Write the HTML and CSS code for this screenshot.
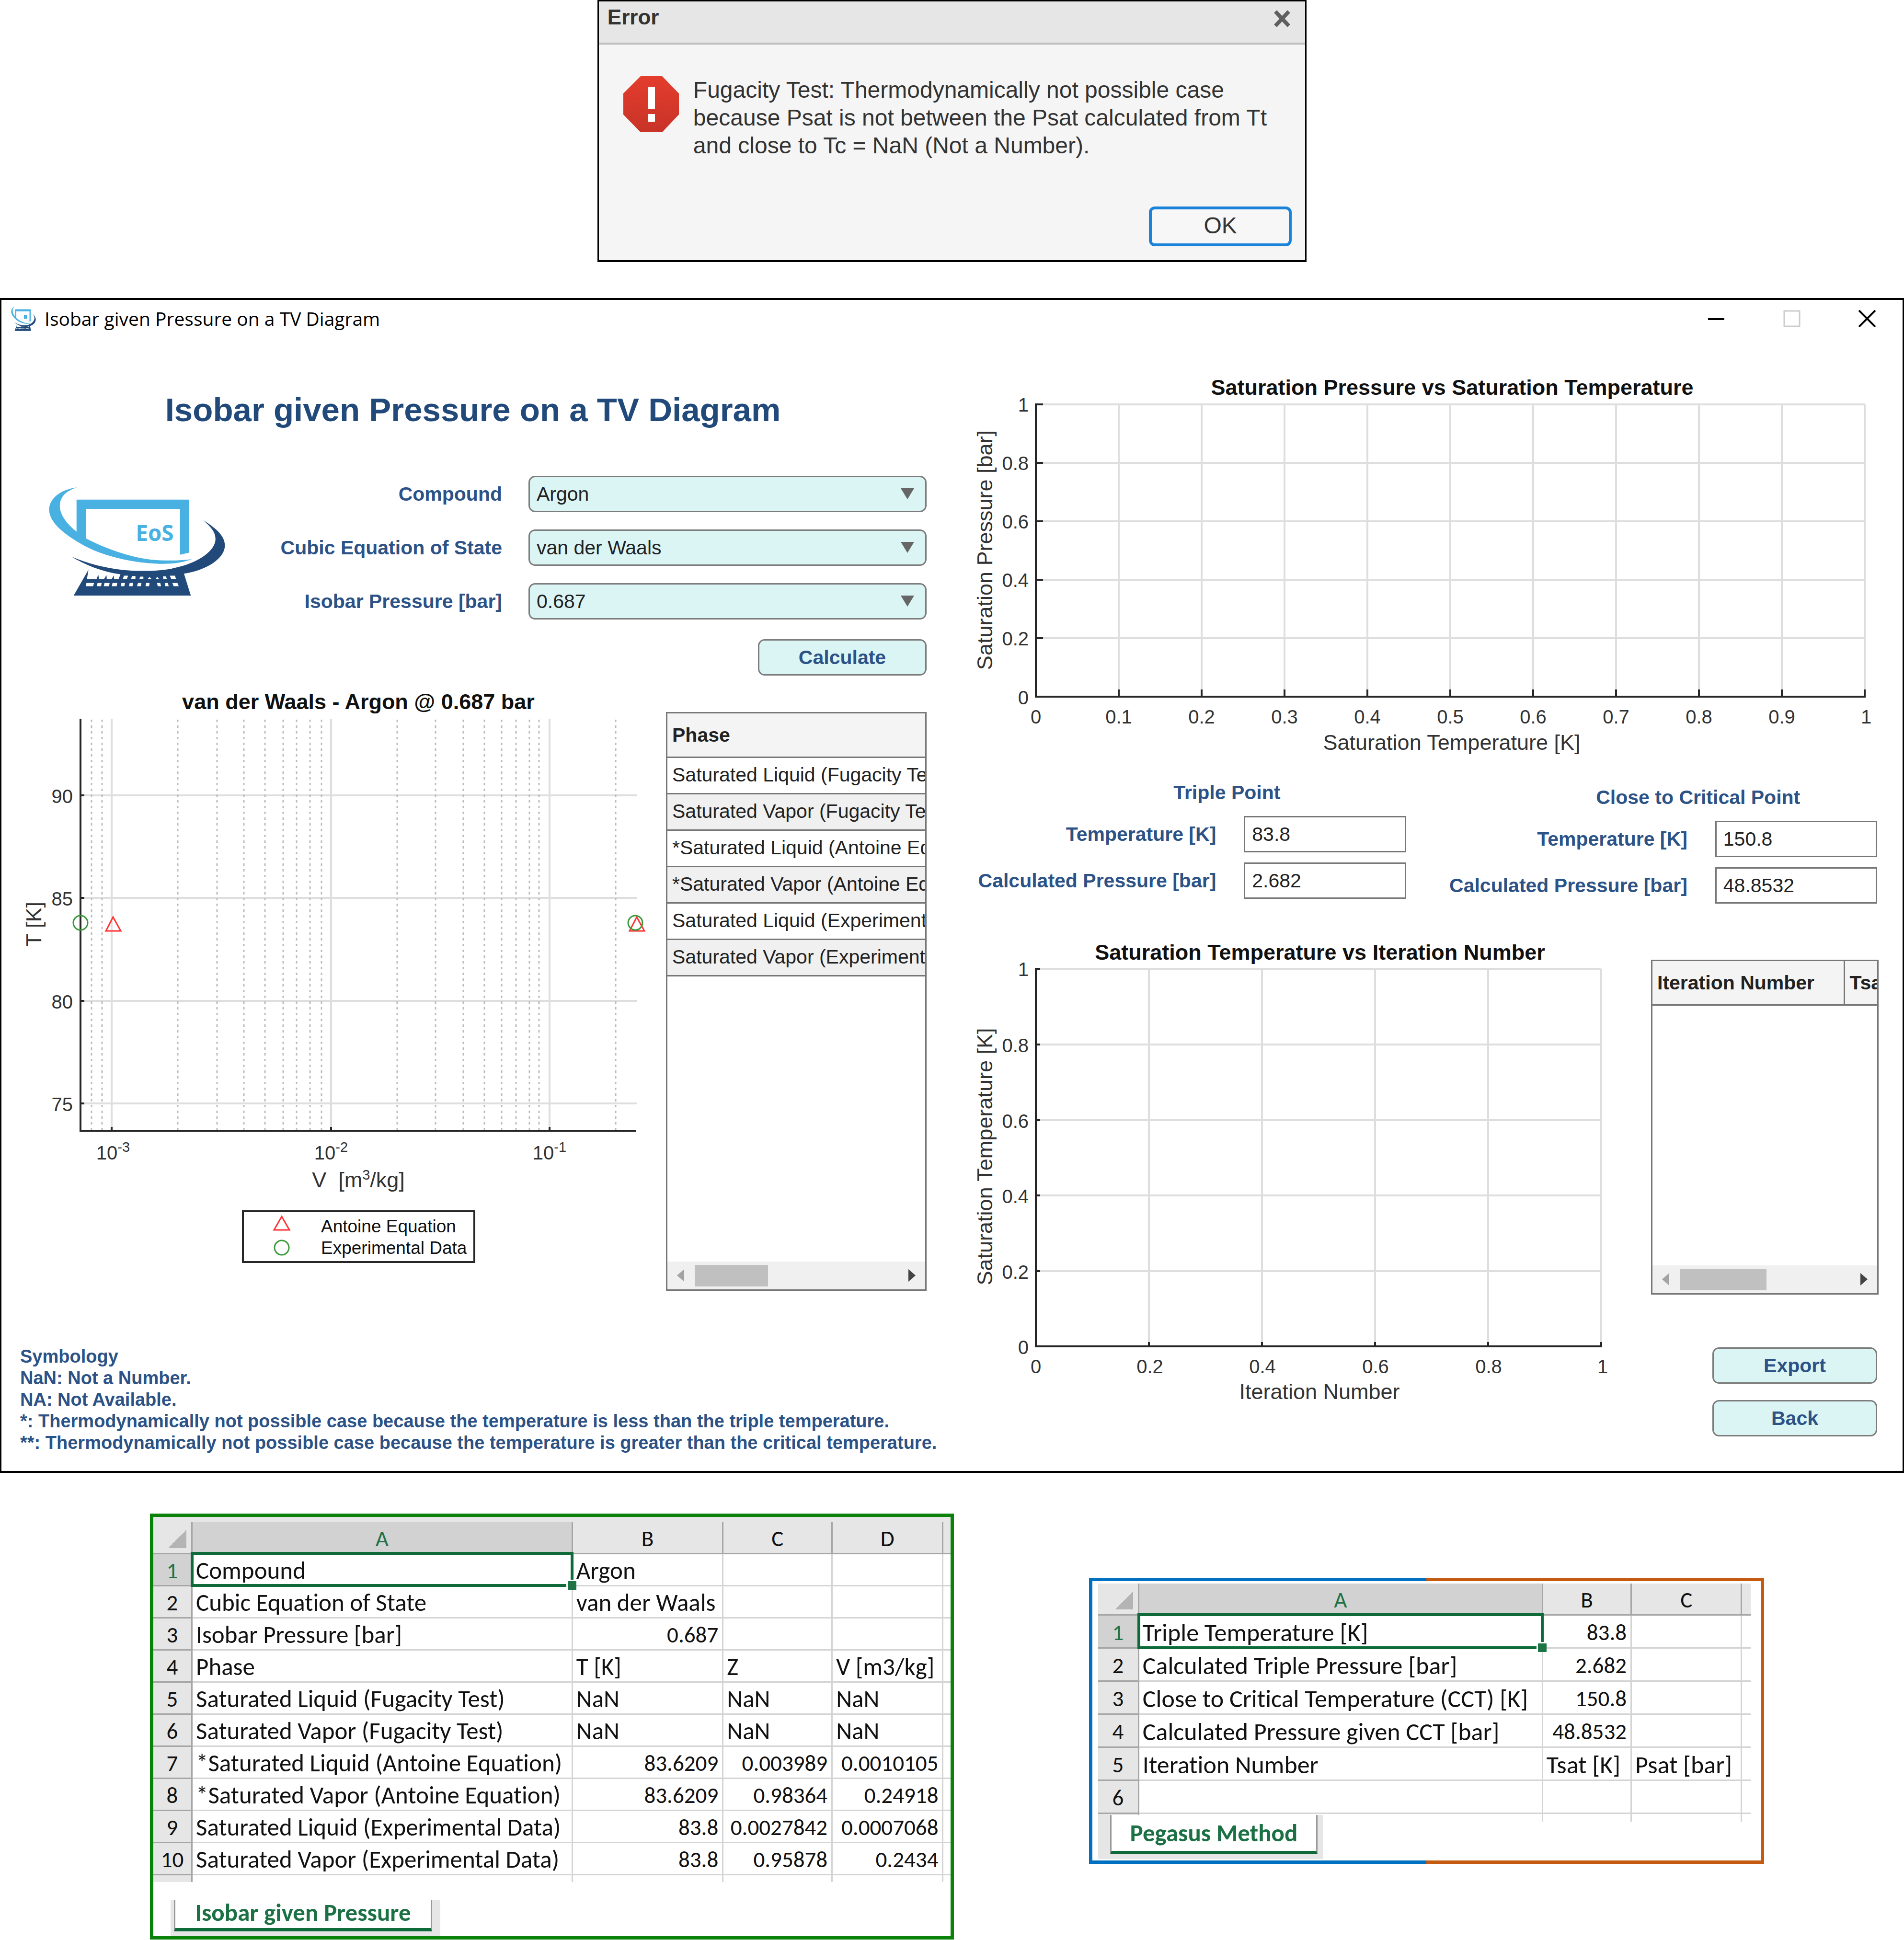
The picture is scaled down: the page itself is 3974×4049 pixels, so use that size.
FILE: index.html
```html
<!DOCTYPE html>
<html lang="en">
<head>
<meta charset="utf-8">
<title>Isobar given Pressure on a TV Diagram</title>
<link rel="stylesheet" href="styles.css">
</head>
<body>
<section class="dialog" role="alertdialog" aria-labelledby="dlg-title">
  <header class="dialog-bar">
    <h2 id="dlg-title" class="dialog-title">Error</h2>
    <button class="icon-btn" aria-label="Close"><svg width="36" height="36" viewBox="0 0 36 36"><path d="M4 3L32 33M32 3L4 33" stroke="#5f5f5f" stroke-width="8" fill="none"/></svg></button>
  </header>
  <div class="dialog-body">
    <svg class="stop" width="116" height="117" viewBox="0 0 116 117">
      <defs><linearGradient id="red" x1="0" y1="0" x2="0" y2="1"><stop offset="0" stop-color="#e33d2d"/><stop offset="1" stop-color="#c83327"/></linearGradient></defs>
      <path d="M36 0H81L116 36V80L81 117H36L0 80V36Z" fill="url(#red)"/>
      <path d="M51 22H66V69H51ZM51 79H66V95H51Z" fill="#fff"/>
    </svg>
    <p class="dialog-text">Fugacity Test: Thermodynamically not possible case<br>because Psat is not between the Psat calculated from Tt<br>and close to Tc = NaN (Not a Number).</p>
  </div>
  <footer class="dialog-foot"><button class="ok">OK</button></footer>
</section>

<main class="app">
  <header class="titlebar">
    <svg class="app-icon" width="52" height="52" viewBox="60 105 1120 695" preserveAspectRatio="none">
      <use href="#logo-shape"/>
      <rect x="640" y="350" width="150" height="110" fill="#49b1e2"/>
    </svg>
    <span class="app-name">Isobar given Pressure on a TV Diagram</span>
    <div class="win-btns">
      <button class="icon-btn" aria-label="Minimize"><svg width="36" height="36" viewBox="0 0 36 36"><path d="M0 19H34" stroke="#000" stroke-width="4"/></svg></button>
      <button class="icon-btn" aria-label="Maximize" disabled><svg width="36" height="36" viewBox="0 0 36 36"><path d="M2 2H34V34H2Z" stroke="#ccc" stroke-width="3" fill="none"/></svg></button>
      <button class="icon-btn" aria-label="Close"><svg width="36" height="36" viewBox="0 0 36 36"><path d="M1 1L35 35M35 1L1 35" stroke="#000" stroke-width="4"/></svg></button>
    </div>
  </header>

  <div class="columns">
    <div class="left">
      <h1 class="heading">Isobar given Pressure on a TV Diagram</h1>
      <form class="setup" onsubmit="return false">
        <svg class="logo" viewBox="0 0 1260 870" role="img" aria-label="EoS">
          <g id="logo-shape">
            <path fill="#49b1e2" d="M243 115C165 140 135 180 135 235C137 290 180 345 240 393V192H948V525L890 538V250H298V435C450 515 600 555 700 568C800 578 890 576 965 566C900 590 840 597 760 595C600 590 400 550 260 465C150 400 68 330 68 255C68 180 150 125 243 115Z"/>
            <path fill="#214a7a" d="M208 550C350 610 500 640 650 640C740 640 820 632 850 622C1010 590 1113 510 1113 440C1113 395 1085 365 1035 320C1120 375 1172 420 1172 480C1172 560 1060 635 915 657L958 795H222L315 632L305 692H365L377 664L381 692H412L428 666L430 692H460L474 668L476 692H504L516 661C400 645 290 600 208 550Z"/>
            <path fill="#fff" d="M538 670H564L556 692H530ZM588 672H610V692H583ZM640 676H660V692H634ZM698 678L714 692H686ZM746 676L760 692H738ZM783 674H802L808 692H786ZM826 670H858L866 692H836ZM302 716H350L344 736H300ZM372 716H398L394 736H368ZM416 716H448L444 736H411ZM466 716H496L492 736H462ZM522 716H545L540 736H518ZM574 716H595L592 736H569ZM626 716H648L644 736H620ZM678 716H699L696 736H673ZM746 716H766L771 736H750ZM794 716H814L819 736H798ZM842 716H874L882 736H850Z"/>
          </g>
          <text x="612" y="452" class="logo-text">EoS</text>
        </svg>
        <div class="fields">
          <label for="compound">Compound</label>
          <span class="pick"><select id="compound"><option>Argon</option></select></span>
          <label for="eos">Cubic Equation of State</label>
          <span class="pick"><select id="eos"><option>van der Waals</option></select></span>
          <label for="pressure">Isobar Pressure [bar]</label>
          <span class="pick"><select id="pressure"><option>0.687</option></select></span>
          <button class="btn calculate">Calculate</button>
        </div>
      </form>

      <div class="results">
        <svg class="chart" viewBox="40 1430 1310 1264" role="img" aria-label="van der Waals - Argon at 0.687 bar">
          <path class="grid" d="M168 1660H1330M168 1874H1330M168 2089H1330M168 2303H1330M233 1500V2360M691 1500V2360M1147 1500V2360"/>
          <path class="minor" d="M191 1502V2360M213 1502V2360M371 1502V2360M453 1502V2360M509 1502V2360M553 1502V2360M591 1502V2360M619 1502V2360M647 1502V2360M671 1502V2360M829 1502V2360M909 1502V2360M967 1502V2360M1011 1502V2360M1047 1502V2360M1077 1502V2360M1105 1502V2360M1125 1502V2360M1285 1502V2360"/>
          <path class="axis" d="M168 1500V2360H1328M168 1660H176M168 1874H176M168 2089H176M168 2303H176M233 2360V2352M691 2360V2352M1147 2360V2352"/>
          <g class="red"><path d="M236 1914L252 1943H221Z"/><path d="M1329 1914L1345 1943H1314Z"/><path d="M588 2539L604 2567H572Z"/></g>
          <g class="green"><circle cx="168" cy="1926" r="15"/><circle cx="1326" cy="1926" r="15"/><circle cx="588" cy="2604" r="15"/></g>
          <text class="title" x="748" y="1480">van der Waals - Argon @ 0.687 bar</text>
          <g class="tick end"><text x="152" y="1676">90</text><text x="152" y="1890">85</text><text x="152" y="2105">80</text><text x="152" y="2319">75</text></g>
          <g class="tick"><text x="236" y="2420">10<tspan class="sup" dy="-16">-3</tspan></text><text x="691" y="2420">10<tspan class="sup" dy="-16">-2</tspan></text><text x="1147" y="2420">10<tspan class="sup" dy="-16">-1</tspan></text></g>
          <text class="name" x="748" y="2478" xml:space="preserve">V  [m<tspan class="sup" dy="-16">3</tspan><tspan dy="16">/kg]</tspan></text>
          <text class="name" transform="translate(86 1929) rotate(-90)">T [K]</text>
          <path class="frame" d="M507 2528H990V2634H507Z"/>
          <text class="key" x="670" y="2572">Antoine Equation</text>
          <text class="key" x="670" y="2617">Experimental Data</text>
        </svg>
        <div class="panel phase-panel">
          <table class="list phases">
            <thead><tr><th scope="col">Phase</th></tr></thead>
            <tbody>
              <tr><td>Saturated Liquid (Fugacity Test)</td></tr>
              <tr><td>Saturated Vapor (Fugacity Test)</td></tr>
              <tr><td>*Saturated Liquid (Antoine Equation)</td></tr>
              <tr><td>*Saturated Vapor (Antoine Equation)</td></tr>
              <tr><td>Saturated Liquid (Experimental Data)</td></tr>
              <tr><td>Saturated Vapor (Experimental Data)</td></tr>
            </tbody>
          </table>
          <div class="scroll"><i class="arr prev"></i><span class="track"><i class="thumb phase-thumb"></i></span><i class="arr next"></i></div>
        </div>
      </div>

      <div class="symbology">Symbology<br>NaN: Not a Number.<br>NA: Not Available.<br>*: Thermodynamically not possible case because the temperature is less than the triple temperature.<br>**: Thermodynamically not possible case because the temperature is greater than the critical temperature.</div>
    </div>

    <div class="right">
      <svg class="chart" viewBox="2030 770 1891 810" role="img" aria-label="Saturation Pressure vs Saturation Temperature">
        <path class="grid" d="M2162 844H3892M2162 966H3892M2162 1088H3892M2162 1210H3892M2162 1332H3892M2335 844V1454M2508 844V1454M2681 844V1454M2854 844V1454M3027 844V1454M3200 844V1454M3373 844V1454M3546 844V1454M3719 844V1454M3892 844V1454"/>
        <path class="axis" d="M2162 842V1454H3894M2162 844H2177M2162 966H2177M2162 1088H2177M2162 1210H2177M2162 1332H2177M2335 1454V1439M2508 1454V1439M2681 1454V1439M2854 1454V1439M3027 1454V1439M3200 1454V1439M3373 1454V1439M3546 1454V1439M3719 1454V1439M3892 1454V1439"/>
        <text class="title" x="3031" y="824">Saturation Pressure vs Saturation Temperature</text>
        <g class="tick end"><text x="2147" y="859">1</text><text x="2147" y="981">0.8</text><text x="2147" y="1103">0.6</text><text x="2147" y="1225">0.4</text><text x="2147" y="1347">0.2</text><text x="2147" y="1470">0</text></g>
        <g class="tick"><text x="2162" y="1510">0</text><text x="2335" y="1510">0.1</text><text x="2508" y="1510">0.2</text><text x="2681" y="1510">0.3</text><text x="2854" y="1510">0.4</text><text x="3027" y="1510">0.5</text><text x="3200" y="1510">0.6</text><text x="3373" y="1510">0.7</text><text x="3546" y="1510">0.8</text><text x="3719" y="1510">0.9</text><text x="3895" y="1510">1</text></g>
        <text class="name" x="3030" y="1565">Saturation Temperature [K]</text>
        <text class="name" transform="translate(2071 1148) rotate(-90)">Saturation Pressure [bar]</text>
      </svg>

      <div class="points">
        <section class="point">
          <h3 class="point-title">Triple Point</h3>
          <label for="tt">Temperature [K]</label><input id="tt" value="83.8">
          <label for="tp">Calculated Pressure [bar]</label><input id="tp" value="2.682">
        </section>
        <section class="point critical">
          <h3 class="point-title">Close to Critical Point</h3>
          <label for="ct">Temperature [K]</label><input id="ct" value="150.8">
          <label for="cp">Calculated Pressure [bar]</label><input id="cp" value="48.8532">
        </section>
      </div>

      <div class="iterations">
        <svg class="chart" viewBox="2030 1950 1330 1048" role="img" aria-label="Saturation Temperature vs Iteration Number">
          <path class="grid" d="M2162 2022H3342M2162 2180H3342M2162 2338H3342M2162 2495H3342M2162 2653H3342M2398 2022V2810M2634 2022V2810M2870 2022V2810M3106 2022V2810M3342 2022V2810"/>
          <path class="axis" d="M2162 2020V2810H3344M2162 2022H2171M2162 2180H2171M2162 2338H2171M2162 2495H2171M2162 2653H2171M2398 2810V2801M2634 2810V2801M2870 2810V2801M3106 2810V2801M3342 2810V2801"/>
          <text class="title" x="2755" y="2003">Saturation Temperature vs Iteration Number</text>
          <g class="tick end"><text x="2147" y="2037">1</text><text x="2147" y="2196">0.8</text><text x="2147" y="2354">0.6</text><text x="2147" y="2511">0.4</text><text x="2147" y="2669">0.2</text><text x="2147" y="2826">0</text></g>
          <g class="tick"><text x="2162" y="2866">0</text><text x="2400" y="2866">0.2</text><text x="2635" y="2866">0.4</text><text x="2871" y="2866">0.6</text><text x="3107" y="2866">0.8</text><text x="3345" y="2866">1</text></g>
          <text class="name" x="2754" y="2920">Iteration Number</text>
          <text class="name" transform="translate(2071 2414) rotate(-90)">Saturation Temperature [K]</text>
        </svg>
        <div class="side">
          <div class="panel">
            <table class="list iter">
              <thead><tr><th scope="col">Iteration Number</th><th scope="col">Tsat [K]</th></tr></thead>
            </table>
            <div class="scroll"><i class="arr prev"></i><span class="track"><i class="thumb iter-thumb"></i></span><i class="arr next"></i></div>
          </div>
          <button class="btn export">Export</button>
          <button class="btn back">Back</button>
        </div>
      </div>
    </div>
  </div>
</main>

<div class="sheets">
  <section class="sheet results-sheet">
    <table class="cells">
      <colgroup><col style="width:4.93%"><col style="width:47.7%"><col style="width:18.9%"><col style="width:13.7%"><col style="width:13.9%"><col></colgroup>
      <thead><tr><th class="corner"></th><th class="on">A</th><th>B</th><th>C</th><th>D</th><th></th></tr></thead>
      <tbody>
        <tr><th class="on">1</th><td class="sel">Compound</td><td>Argon</td><td></td><td></td><td></td></tr>
        <tr><th>2</th><td>Cubic Equation of State</td><td>van der Waals</td><td></td><td></td><td></td></tr>
        <tr><th>3</th><td>Isobar Pressure [bar]</td><td class="num">0.687</td><td></td><td></td><td></td></tr>
        <tr><th>4</th><td>Phase</td><td>T [K]</td><td>Z</td><td>V [m3/kg]</td><td></td></tr>
        <tr><th>5</th><td>Saturated Liquid (Fugacity Test)</td><td>NaN</td><td>NaN</td><td>NaN</td><td></td></tr>
        <tr><th>6</th><td>Saturated Vapor (Fugacity Test)</td><td>NaN</td><td>NaN</td><td>NaN</td><td></td></tr>
        <tr><th>7</th><td>*Saturated Liquid (Antoine Equation)</td><td class="num">83.6209</td><td class="num">0.003989</td><td class="num">0.0010105</td><td></td></tr>
        <tr><th>8</th><td>*Saturated Vapor (Antoine Equation)</td><td class="num">83.6209</td><td class="num">0.98364</td><td class="num">0.24918</td><td></td></tr>
        <tr><th>9</th><td>Saturated Liquid (Experimental Data)</td><td class="num">83.8</td><td class="num">0.0027842</td><td class="num">0.0007068</td><td></td></tr>
        <tr><th>10</th><td>Saturated Vapor (Experimental Data)</td><td class="num">83.8</td><td class="num">0.95878</td><td class="num">0.2434</td><td></td></tr>
        <tr class="cut"><th></th><td></td><td></td><td></td><td></td><td></td></tr>
      </tbody>
    </table>
    <div class="tabs"><button class="tab">Isobar given Pressure</button></div>
  </section>

  <section class="sheet pegasus-sheet">
    <table class="cells">
      <colgroup><col style="width:6.3%"><col style="width:61.9%"><col style="width:13.6%"><col style="width:16.9%"><col></colgroup>
      <thead><tr><th class="corner"></th><th class="on">A</th><th>B</th><th>C</th><th></th></tr></thead>
      <tbody>
        <tr><th class="on">1</th><td class="sel">Triple Temperature [K]</td><td class="num">83.8</td><td></td><td></td></tr>
        <tr><th>2</th><td>Calculated Triple Pressure [bar]</td><td class="num">2.682</td><td></td><td></td></tr>
        <tr><th>3</th><td>Close to Critical Temperature (CCT) [K]</td><td class="num">150.8</td><td></td><td></td></tr>
        <tr><th>4</th><td>Calculated Pressure given CCT [bar]</td><td class="num">48.8532</td><td></td><td></td></tr>
        <tr><th>5</th><td>Iteration Number</td><td>Tsat [K]</td><td>Psat [bar]</td><td></td></tr>
        <tr><th>6</th><td></td><td></td><td></td><td></td></tr>
        <tr class="cut"><th></th><td></td><td></td><td></td><td></td></tr>
      </tbody>
    </table>
    <div class="tabs"><button class="tab">Pegasus Method</button></div>
  </section>
</div>
</body>
</html>
```
FILE: styles.css
```css
* { box-sizing: border-box; }
body {
  margin: 0;
  background: #fff;
  font-family: "Liberation Sans", Arial, sans-serif;
  font-size: 41px;
  line-height: 48px;
  color: #222;
}
h1, h2, h3, p { margin: 0; }
button, select, input { font: inherit; color: inherit; margin: 0; }
svg { display: block; }
.icon-btn { border: 0; background: none; padding: 0; }

/* Error dialog */
.dialog {
  width: 37.25%;
  margin: 0 auto;
  border: 3px solid #000;
  border-bottom-width: 4px;
  background: #f5f5f5;
  font-size: 48px;
  line-height: 58px;
  color: #333;
}
.dialog-bar {
  display: flex;
  justify-content: space-between;
  align-items: flex-start;
  height: 90px;
  padding: 4px 30px 0 18px;
  background: #e6e6e6;
  border-bottom: 4px solid #bdbdbd;
}
.dialog-bar .icon-btn { padding-top: 14px; }
.dialog-title { font-size: 44px; }
.dialog-body { display: flex; gap: 30px; padding: 66px 52px 0 51px; }
.dialog-text { white-space: nowrap; }
.dialog-foot { display: flex; justify-content: flex-end; padding: 98px 28px 29px; }
.ok {
  width: 298px;
  height: 83px;
  padding: 0 0 4px;
  border: 6px solid #1a82d8;
  border-radius: 12px;
  background: #f7f7f7;
}

/* Application window */
.app {
  margin-top: 75px;
  border: 3px solid #000;
  border-width: 4px 3px;
  background: #fff;
}
.titlebar {
  display: flex;
  align-items: center;
  height: 84px;
  padding: 0 56px 6px 20px;
  font-family: "Open Sans", "Noto Sans", sans-serif;
  font-size: 39px;
  color: #000;
}
.app-name { margin-left: 18px; flex: 1; }
.win-btns { display: flex; gap: 121px; }
.columns { display: grid; grid-template-columns: 1997fr 1971fr; }
.left { min-width: 0; padding: 106px 66px 0 37px; }
.right { min-width: 0; padding: 60px 50px 72px 30px; }
.heading {
  font-size: 69px;
  line-height: 80px;
  text-align: center;
  color: #214a7a;
}
label, .point-title, .symbology { font-weight: bold; color: #2c5286; }

.setup { display: grid; grid-template-columns: 460fr 1434fr; margin-top: 83px; }
.logo { width: 91%; margin-left: 40px; }
.logo-text { font: bold 138px "Open Sans", "Noto Sans", sans-serif; fill: #49b1e2; }
.fields {
  display: grid;
  grid-template-columns: 603fr 831fr;
  row-gap: 36px;
  align-items: center;
  padding-top: 14px;
}
.fields label { text-align: right; padding-right: 55px; }
.pick { position: relative; display: block; }
.pick::after {
  content: "";
  position: absolute;
  right: 26px;
  top: 26px;
  width: 28px;
  height: 23px;
  background: #666;
  clip-path: polygon(0 0, 100% 0, 50% 100%);
  pointer-events: none;
}
.pick select {
  display: block;
  appearance: none;
  width: 100%;
  height: 76px;
  padding: 0 14px;
  border: 3px solid #7c7c7c;
  border-radius: 14px;
  background: #dbf4f4;
}
.btn {
  height: 76px;
  padding: 0;
  border: 3px solid #7c7c7c;
  border-radius: 14px;
  background: #dbf4f4;
  color: #2c5286;
  font-weight: bold;
}
.calculate { grid-column: 2; justify-self: end; width: 352px; margin-top: 5px; }

.results { display: grid; grid-template-columns: 1310fr 544fr; column-gap: 40px; margin-top: 20px; }
.chart { width: 100%; }
.chart text { fill: #333; text-anchor: middle; }
.chart .title { font-size: 45px; font-weight: bold; fill: #111; }
.chart .tick text { font-size: 40px; }
.chart .end text { text-anchor: end; }
.chart .name { font-size: 45px; }
.chart .sup { font-size: 29px; }
.chart .key { font-size: 37px; text-anchor: start; fill: #111; }
.grid { stroke: #dedede; stroke-width: 4; fill: none; }
.minor { stroke: #bbb; stroke-width: 3; stroke-dasharray: 5 7; }
.axis { stroke: #262626; stroke-width: 4; fill: none; }
.red { stroke: #f33; stroke-width: 3; fill: none; }
.green { stroke: #3a9a3a; stroke-width: 3; fill: none; }
.frame { stroke: #262626; stroke-width: 4; fill: none; }

/* List panels with a horizontal scroll bar */
.panel {
  display: flex;
  flex-direction: column;
  min-width: 0;
  overflow: hidden;
  border: 3px solid #777;
  background: #fff;
}
.phase-panel { margin-top: 56px; }
.list { border-collapse: collapse; table-layout: fixed; white-space: nowrap; }
.list th, .list td { padding: 0 10px; height: 76px; border-bottom: 3px solid #777; text-align: left; }
.list th { height: 91px; background: #f4f4f4; }
.list td { padding-bottom: 3px; }
.list tbody tr:nth-child(even) { background: #f0f0f0; }
.phases { width: 740px; }
.iter { width: 620px; }
.iter th:first-child { width: 400px; border-right: 3px solid #777; }
.scroll {
  display: flex;
  align-items: center;
  height: 58px;
  margin-top: auto;
  padding: 0 20px;
  background: #f0f0f0;
}
.track { flex: 1; padding: 0 22px; }
.thumb { display: block; height: 45px; background: #c0c0c0; }
.phase-thumb { width: 36%; }
.iter-thumb { width: 51%; }
.arr { width: 15px; height: 26px; background: #444; clip-path: polygon(0 0, 100% 50%, 0 100%); }
.prev { background: #a3a3a3; clip-path: polygon(100% 0, 0 50%, 100% 100%); }

.symbology { margin-top: 115px; padding-left: 2px; font-size: 38px; line-height: 45px; white-space: nowrap; }

.points { display: grid; grid-template-columns: 1fr 1fr; column-gap: 86px; align-items: start; padding: 50px 3px 0 7px; }
.point { display: grid; grid-template-columns: 559fr 338fr; row-gap: 21px; align-items: center; }
.critical { margin-top: 10px; }
.point-title { grid-column: 1 / 3; padding-left: 150px; margin-bottom: 4px; font-size: 41px; text-align: center; }
.point label { text-align: right; padding-right: 58px; white-space: nowrap; }
.point input { width: 100%; height: 76px; padding: 0 14px; border: 3px solid #777; background: #fff; }

.iterations { display: grid; grid-template-columns: 1330fr 475fr; column-gap: 86px; margin-top: 64px; }
.side { display: flex; flex-direction: column; min-width: 0; padding-top: 53px; }
.side .panel { flex: 1; }
.side .btn { align-self: flex-end; width: 344px; margin-right: 3px; }
.export { margin-top: 110px; }
.back { margin-top: 34px; }

/* Spreadsheets */
.sheets {
  display: grid;
  grid-template-columns: 1678fr 1409fr;
  column-gap: 282px;
  align-items: start;
  padding: 85px 292px 0 313px;
  font-family: Carlito, Lato, sans-serif;
  font-size: 51px;
  font-variant-ligatures: none;
  color: #111;
}
.sheet { border: 7px solid #0a820a; background: #fff; min-width: 0; }
.results-sheet .cells { border-top: 11px solid #e6e6e6; }
.pegasus-sheet {
  margin-top: 134px;
  padding: 5px 21px 3px 12px;
  border-image: linear-gradient(90deg, #0070c0 50%, #c55a11 50%) 7;
}
.cells { width: 100%; table-layout: fixed; border-collapse: separate; border-spacing: 0; white-space: nowrap; }
.cells th, .cells td { height: 67px; padding: 4px 8px 0 7px; border: 0 solid #d4d4d4; border-width: 0 3px 3px 0; text-align: left; }
.cells td:last-child, .cells thead th:last-child { border-right: 0; }
.cells th { padding: 4px 0 0; background: #e6e6e6; border-color: #a6a6a6; font-size: 47px; font-weight: normal; text-align: center; }
.cells .on { background: #d2d2d2; color: #217346; }
.cells .num { font-size: 47px; text-align: right; }
.cells .corner { background: linear-gradient(to bottom right, transparent 50%, #b4b4b4 50%) right 10px bottom 10px / 38px 38px no-repeat #e6e6e6; }
.cells .cut th, .cells .cut td { height: 14px; border-bottom: 0; }
.sel { position: relative; }
.sel::before { content: ""; position: absolute; inset: -5px -4px -4px -4px; border: 6px solid #0e6b39; }
.sel::after { content: ""; position: absolute; right: -10px; bottom: -10px; width: 18px; height: 18px; background: #1d7444; border: solid #fff; border-width: 3px 0 0 3px; }
.pegasus-sheet .cells { font-size: 52px; }
.pegasus-sheet tbody th, .pegasus-sheet tbody td { height: 69px; }
.pegasus-sheet .cells .cut th, .pegasus-sheet .cells .cut td { height: 16px; }
.tabs { width: fit-content; padding: 0 17px 10px 7px; background: #e6e6e6; }
.results-sheet .tabs { margin: 38px 0 0 36px; }
.pegasus-sheet .tabs { position: relative; margin-top: -14px; padding: 0 11px 10px 25px; }
.tab {
  display: block;
  width: 539px;
  height: 65px;
  padding: 0 0 6px;
  border: 3px solid #999;
  border-width: 0 3px;
  border-bottom: 7px solid #0e6b39;
  background: #fff;
  color: #1b7044;
  font-weight: bold;
}
.pegasus-sheet .tab { width: 433px; height: 82px; padding: 0; }
```
